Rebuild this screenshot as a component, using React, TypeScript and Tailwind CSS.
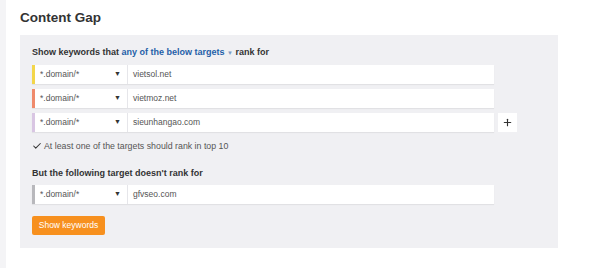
import { Check, Plus } from "lucide-react";

type Target = {
  color: string;
  value: string;
  plus?: boolean;
};

const targets: Target[] = [
  { color: "bg-[#f3d64a]", value: "vietsol.net" },
  { color: "bg-[#ef8a6c]", value: "vietmoz.net" },
  { color: "bg-[#d9c6e3]", value: "sieunhangao.com", plus: true },
];

function TargetRow({ color, value, plus }: Target) {
  return (
    <div className="flex items-center gap-[4px]">
      <div className="flex h-[19px] w-[462px] bg-white shadow-[0_1px_1px_rgba(0,0,0,0.06)]">
        <div className={`w-[3px] ${color}`} />
        <div className="flex w-[93px] items-center justify-between border-r border-[#e6e6ea] pl-[5px] pr-[6px] text-[8.5px] text-[#555]">
          <span>*.domain/*</span>
          <span className="text-[7px] text-[#333]">▼</span>
        </div>
        <div className="flex items-center pl-[5px] text-[8.5px] text-[#555]">{value}</div>
      </div>
      {plus && (
        <button className="flex h-[19px] w-[19px] items-center justify-center bg-white text-[#333]">
          <Plus size={11} strokeWidth={2.5} />
        </button>
      )}
    </div>
  );
}

export default function App() {
  return (
    <div
      className="flex h-[268px] w-[600px] bg-white"
      style={{ fontFamily: '"Liberation Sans", Arial, sans-serif' }}
    >
      <div className="w-[6px] bg-[#f4f4f6]" />
      <div className="flex-1 pl-[14px] pt-[9px]">
        <h1 className="text-[13.5px] font-bold leading-[18px] text-[#333]">Content Gap</h1>

        <div className="mt-[8px] w-[538px] bg-[#f0f0f3] pb-[13px] pl-[12px] pt-[11px]">
          <p className="text-[9px] font-bold leading-[12px] text-[#333]">
            Show keywords that{" "}
            <span className="text-[#1f5fa8]">any of the below targets</span>{" "}
            <span className="text-[6px] font-normal text-[#7d9cc4]">▼</span> rank for
          </p>

          <div className="mt-[6px] flex flex-col gap-[5px]">
            {targets.map((t) => (
              <TargetRow key={t.value} {...t} />
            ))}
          </div>

          <div className="mt-[8px] flex items-center gap-[2px] text-[8.8px] leading-[12px] text-[#555]">
            <Check size={10} strokeWidth={2.5} className="text-[#333]" />
            <span>At least one of the targets should rank in top 10</span>
          </div>

          <p className="mt-[15px] text-[9px] font-bold leading-[12px] text-[#333]">
            But the following target doesn't rank for
          </p>

          <div className="mt-[6px]">
            <TargetRow color="bg-[#b8b8bc]" value="gfvseo.com" />
          </div>

          <button className="mt-[12px] h-[19px] w-[73px] rounded-[2px] bg-[#f7901e] text-[8.5px] text-white">
            Show keywords
          </button>
        </div>
      </div>
    </div>
  );
}
